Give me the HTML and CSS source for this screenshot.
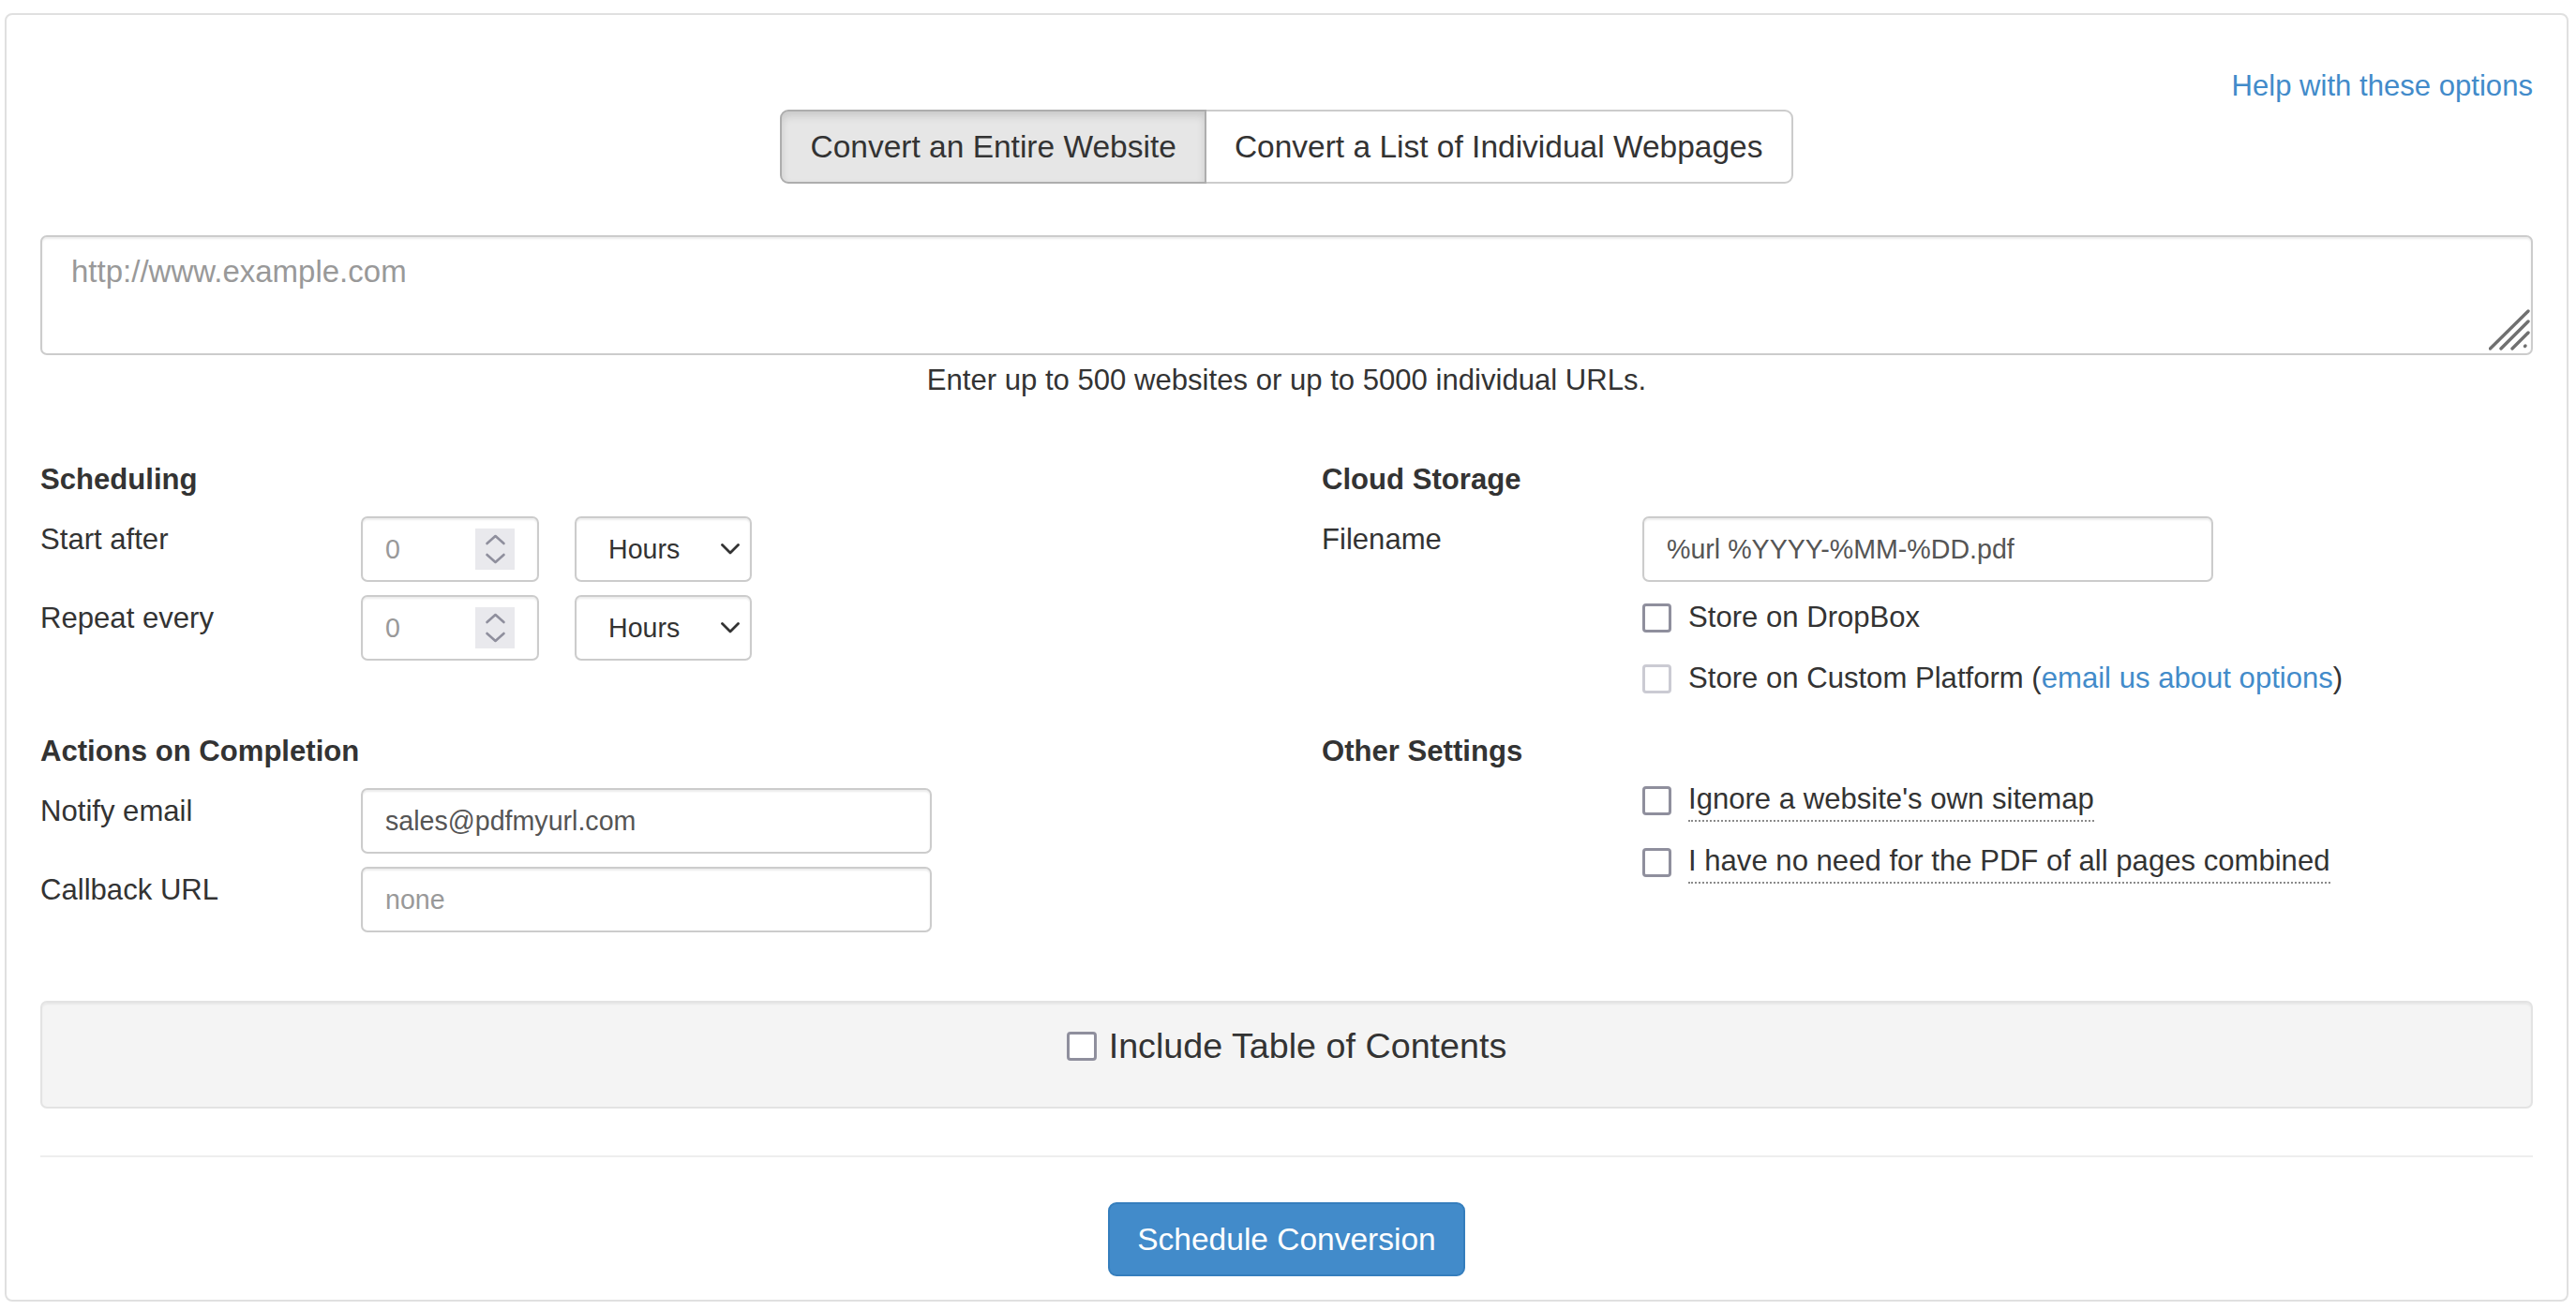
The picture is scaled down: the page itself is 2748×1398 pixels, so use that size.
FILE: index.html
```html
<!DOCTYPE html>
<html lang="en">
<head>
<meta charset="utf-8">
<title>Schedule Conversion</title>
<link rel="stylesheet" href="styles.css">
</head>
<body>
<div class="panel">
  <div class="help-row"><a class="link" href="#">Help with these options</a></div>

  <div class="tabs-row">
    <div class="tab-group">
      <button class="tab tab-active" type="button">Convert an Entire Website</button>
      <button class="tab" type="button">Convert a List of Individual Webpages</button>
    </div>
  </div>

  <div class="url-box">
    <textarea class="url-input" placeholder="http://www.example.com"></textarea>
    <svg class="grip" width="44" height="44" viewBox="0 0 44 44" aria-hidden="true">
      <g stroke="#707070" stroke-width="3.4" stroke-linecap="round" fill="none">
        <line x1="1.5" y1="42" x2="42" y2="2"/>
        <line x1="13" y1="42" x2="42" y2="13"/>
        <line x1="25" y1="42" x2="42" y2="25"/>
        <line x1="38.5" y1="39.5" x2="39" y2="39"/>
      </g>
    </svg>
  </div>
  <p class="hint">Enter up to 500 websites or up to 5000 individual URLs.</p>

  <div class="settings">
    <section class="group">
      <h3 class="group-title">Scheduling</h3>
      <div class="field">
        <span class="field-label">Start after</span>
        <div class="field-controls">
          <div class="control number-control">
            <span class="placeholder">0</span>
            <span class="spinner">
              <svg width="42" height="44" viewBox="0 0 42 44" aria-hidden="true">
                <g stroke="#8f8f9d" stroke-width="2.6" stroke-linecap="round" stroke-linejoin="round" fill="none">
                  <polyline points="12.5,16 21.5,8 30.5,16"/>
                  <polyline points="12.5,28 21.5,36 30.5,28"/>
                </g>
              </svg>
            </span>
          </div>
          <div class="control select-control">
            <span>Hours</span>
            <svg width="20" height="12" viewBox="0 0 20 12" aria-hidden="true">
              <polyline points="1.5,1.5 10,10 18.5,1.5" stroke="#333" stroke-width="2.8" stroke-linecap="round" stroke-linejoin="round" fill="none"/>
            </svg>
          </div>
        </div>
      </div>
      <div class="field">
        <span class="field-label">Repeat every</span>
        <div class="field-controls">
          <div class="control number-control">
            <span class="placeholder">0</span>
            <span class="spinner">
              <svg width="42" height="44" viewBox="0 0 42 44" aria-hidden="true">
                <g stroke="#8f8f9d" stroke-width="2.6" stroke-linecap="round" stroke-linejoin="round" fill="none">
                  <polyline points="12.5,16 21.5,8 30.5,16"/>
                  <polyline points="12.5,28 21.5,36 30.5,28"/>
                </g>
              </svg>
            </span>
          </div>
          <div class="control select-control">
            <span>Hours</span>
            <svg width="20" height="12" viewBox="0 0 20 12" aria-hidden="true">
              <polyline points="1.5,1.5 10,10 18.5,1.5" stroke="#333" stroke-width="2.8" stroke-linecap="round" stroke-linejoin="round" fill="none"/>
            </svg>
          </div>
        </div>
      </div>
    </section>

    <section class="group">
      <h3 class="group-title">Cloud Storage</h3>
      <div class="field">
        <span class="field-label">Filename</span>
        <div class="field-controls">
          <div class="control text-control">%url %YYYY-%MM-%DD.pdf</div>
        </div>
      </div>
      <div class="check-row check-first">
        <span class="checkbox"></span>
        <span>Store on DropBox</span>
      </div>
      <div class="check-row check-next">
        <span class="checkbox checkbox-disabled"></span>
        <span>Store on Custom Platform (<a class="link" href="#">email us about options</a>)</span>
      </div>
    </section>

    <section class="group">
      <h3 class="group-title">Actions on Completion</h3>
      <div class="field">
        <span class="field-label">Notify email</span>
        <div class="field-controls">
          <div class="control text-control">sales@pdfmyurl.com</div>
        </div>
      </div>
      <div class="field">
        <span class="field-label">Callback URL</span>
        <div class="field-controls">
          <div class="control text-control"><span class="placeholder">none</span></div>
        </div>
      </div>
    </section>

    <section class="group">
      <h3 class="group-title">Other Settings</h3>
      <div class="check-row check-other-first">
        <span class="checkbox"></span>
        <span class="dotted">Ignore a website's own sitemap</span>
      </div>
      <div class="check-row check-other-next">
        <span class="checkbox"></span>
        <span class="dotted">I have no need for the PDF of all pages combined</span>
      </div>
    </section>
  </div>

  <div class="well">
    <div class="toc-label">
      <span class="checkbox checkbox-toc"></span>
      <span>Include Table of Contents</span>
    </div>
  </div>

  <hr class="divider">

  <div class="actions">
    <button class="btn-primary" type="button">Schedule Conversion</button>
  </div>
</div>
</body>
</html>
```

FILE: styles.css
```css
* {
  box-sizing: border-box;
}

html,
body {
  margin: 0;
  background: #fff;
}

body {
  font-family: "Liberation Sans", Arial, sans-serif;
  font-size: 31.1px;
  line-height: 44px;
  color: #333;
  padding: 14px 0 0 5px;
}

.panel {
  width: 2735px;
  border: 2px solid #e0e0e0;
  border-radius: 8px;
  padding: 54px 36px 25px;
}

.help-row {
  text-align: right;
  height: 44px;
}

.link {
  color: #428bca;
  text-decoration: none;
}

.tabs-row {
  display: flex;
  justify-content: center;
  margin-top: 3px;
}

.tab-group {
  display: flex;
}

.tab {
  font-family: inherit;
  font-size: 33.5px;
  line-height: 45px;
  padding: 15px 30px;
  margin: 0;
  border: 2px solid #ccc;
  background: #fff;
  color: #333;
}

.tab:first-child {
  border-radius: 9px 0 0 9px;
}

.tab:last-child {
  border-radius: 0 9px 9px 0;
  margin-left: -2px;
}

.tab-active {
  background: #e6e6e6;
  border-color: #adadad;
  box-shadow: inset 0 5px 9px rgba(0, 0, 0, 0.125);
  z-index: 1;
  position: relative;
}

.url-box {
  position: relative;
  margin-top: 55px;
}

.url-input {
  display: block;
  width: 100%;
  height: 128px;
  resize: none;
  font-family: inherit;
  font-size: 33px;
  line-height: 44px;
  padding: 15px 31px;
  border: 2px solid #ccc;
  border-radius: 7px;
  box-shadow: inset 0 2px 2px rgba(0, 0, 0, 0.075);
  color: #555;
  outline: none;
}

.url-input::placeholder {
  color: #999;
}

.grip {
  position: absolute;
  right: 3px;
  bottom: 5px;
}

.hint {
  margin: 5px 0 0;
  text-align: center;
}

.settings {
  display: grid;
  grid-template-columns: 1292px 1292px;
  column-gap: 75px;
  row-gap: 34px;
  align-items: start;
  margin-top: 62px;
}

.group-title {
  margin: 0;
  font-size: 31.1px;
  line-height: 44px;
  font-weight: bold;
}

.field {
  display: grid;
  grid-template-columns: 342px auto;
  margin-top: 17px;
}

.field + .field {
  margin-top: 14px;
}

.field-label {
  padding-top: 3px;
}

.field-controls {
  display: flex;
  gap: 38px;
}

.control {
  height: 70px;
  border: 2px solid #ccc;
  border-radius: 7px;
  box-shadow: inset 0 2px 2px rgba(0, 0, 0, 0.075);
  background: #fff;
  display: flex;
  align-items: center;
  font-size: 28.6px;
  line-height: 40px;
}

.placeholder {
  color: #999;
}

.number-control {
  width: 190px;
  padding: 0 24px;
  justify-content: space-between;
}

.spinner {
  display: flex;
  width: 42px;
  height: 44px;
  background: #e9e9ed;
}

.select-control {
  width: 189px;
  padding: 0 11px 0 34px;
  justify-content: space-between;
  color: #333;
}

.text-control {
  width: 609px;
  padding: 0 24px;
  color: #555;
}

.check-row {
  display: flex;
  align-items: center;
  gap: 18px;
  padding-left: 342px;
  line-height: 44px;
}

.check-first {
  margin-top: 16px;
}

.check-next {
  margin-top: 21px;
}

.check-other-first {
  margin-top: 7px;
}

.check-other-next {
  margin-top: 20px;
}

.checkbox {
  flex: none;
  width: 31px;
  height: 31px;
  border: 3px solid #8f8f9d;
  border-radius: 4px;
  background: #fff;
}

.checkbox-disabled {
  border-color: #cbcbd3;
}

.dotted {
  border-bottom: 2px dotted #8a8a8a;
}

.well {
  margin-top: 73px;
  background: #f4f4f4;
  border: 2px solid #e3e3e3;
  border-radius: 7px;
  box-shadow: inset 0 2px 2px rgba(0, 0, 0, 0.05);
  padding: 20px 0 38px;
  display: flex;
  justify-content: center;
}

.toc-label {
  display: flex;
  align-items: center;
  gap: 13px;
  font-size: 37.7px;
  line-height: 53px;
}

.checkbox-toc {
  width: 32px;
}

.divider {
  margin: 50px 0 0;
  height: 0;
  border: 0;
  border-top: 2px solid #eee;
}

.actions {
  display: flex;
  justify-content: center;
  margin-top: 48px;
}

.btn-primary {
  font-family: inherit;
  font-size: 33.5px;
  line-height: 45px;
  padding: 15px 29px;
  margin: 0;
  border: 2px solid #357ebd;
  border-radius: 9px;
  background: #428bca;
  color: #fff;
}
```
